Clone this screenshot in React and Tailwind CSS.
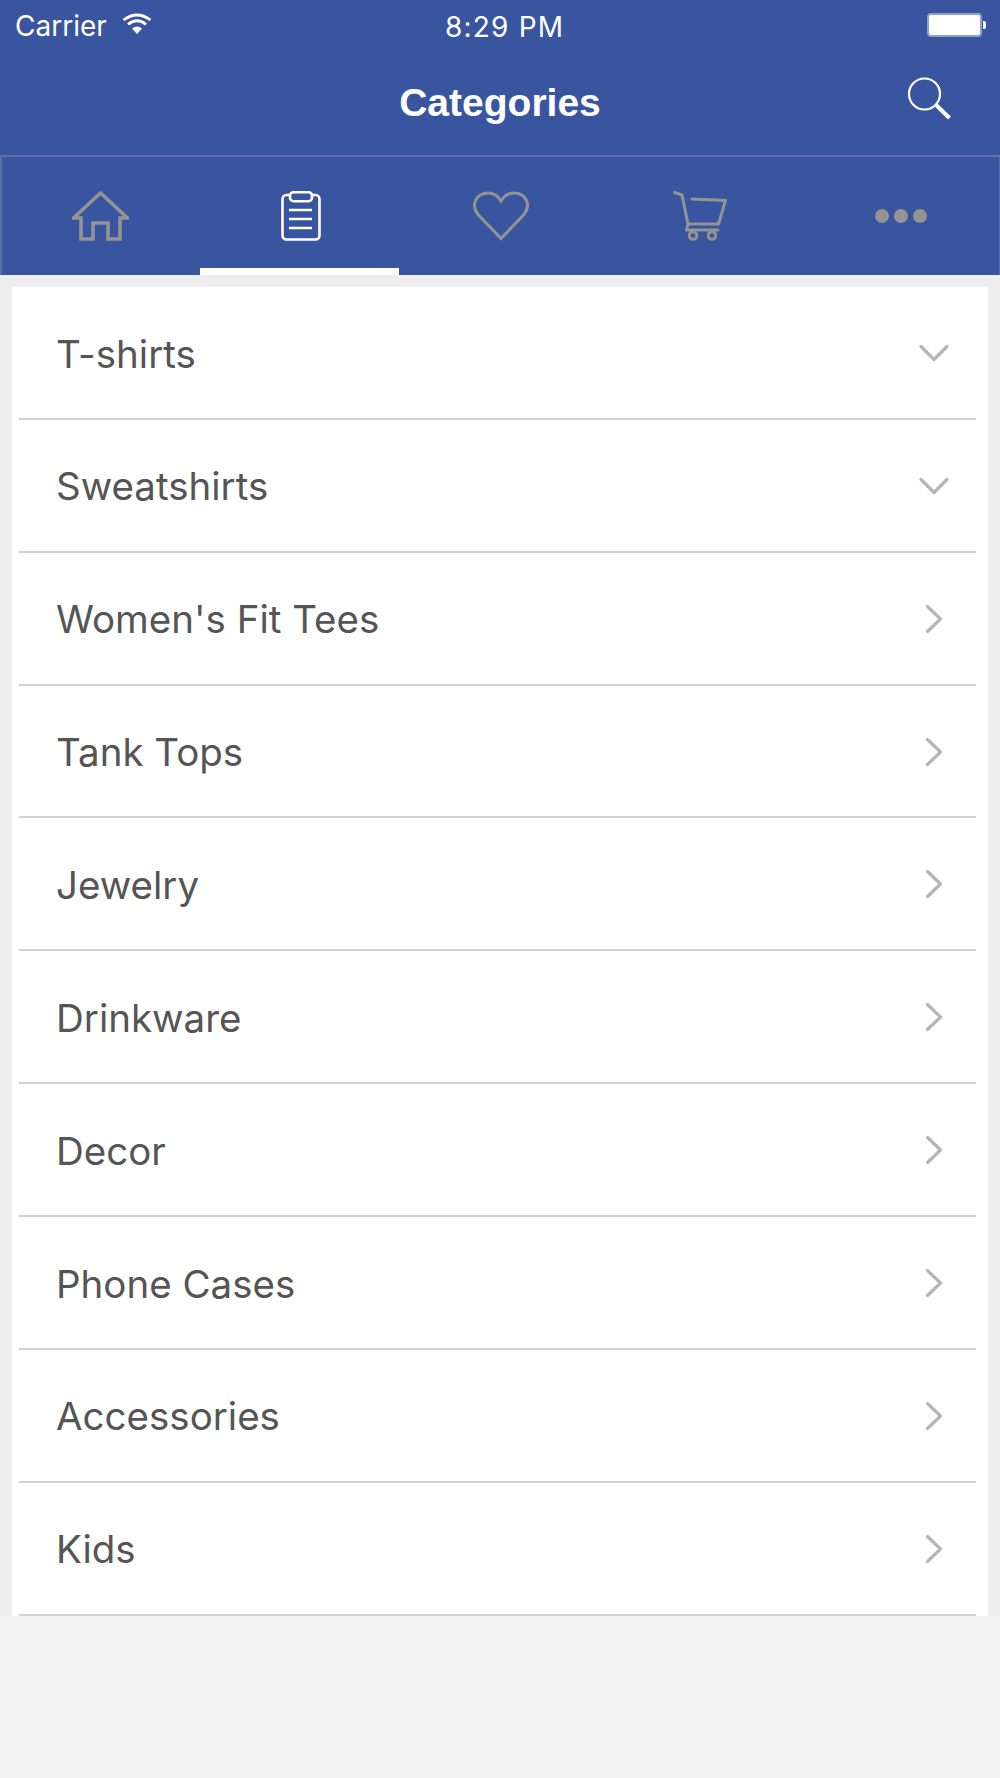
const rows = ["T-shirts","Sweatshirts","Women's Fit Tees","Tank Tops","Jewelry","Drinkware","Decor","Phone Cases","Accessories","Kids"];

function Chevron({ down }) {
  return (
    <svg width="32" height="32" viewBox="0 0 32 32" fill="none" stroke="#b5b5b5" strokeWidth="3.2" strokeLinecap="round" strokeLinejoin="round" className="mt-[1px]">
      {down ? <path d="M3 9.5 L16 22.5 L29 9.5" /> : <path d="M9.5 3.5 L22.5 16 L9.5 28.5" />}
    </svg>
  );
}

export default function App() {
  return (
    <div className="w-[1000px] h-[1778px] bg-[#f1f1f2] overflow-hidden flex flex-col" style={{ fontFamily: "Inter, sans-serif" }}>
      <div className="h-[155px] bg-[#3a559f] text-white flex flex-col shrink-0">
        <div className="h-[50px] pl-[15px] pr-[14px] pt-[1px] flex items-center justify-between relative text-[28px]">
          <div className="flex items-center gap-[15px]">
            <span>Carrier</span>
            <svg width="30" height="22" viewBox="0 0 30 22" fill="white" className="-mt-[3px]">
              <path d="M15 21 L10 15.5 Q15 11.5 20 15.5 Z" />
              <path d="M1.5 7 Q15 -3 28.5 7" fill="none" stroke="white" strokeWidth="2.8" />
              <path d="M6 11.5 Q15 4 24 11.5" fill="none" stroke="white" strokeWidth="2.8" />
            </svg>
          </div>
          <span className="absolute left-[445px] top-[6px] tracking-[1.2px]">8:29 PM</span>
          <div className="flex items-center -mt-[1px]">
            <div className="w-[55px] h-[24px] rounded-[4px] border-2 border-[#8fa0cf] bg-white" />
            <div className="w-[3px] h-[8px] bg-white rounded-r-[2px] ml-[1px]" />
          </div>
        </div>
        <div className="flex-1 flex items-center justify-center relative pt-[2px]">
          <span className="text-[39px] font-bold" style={{ fontFamily: '"Liberation Sans", sans-serif' }}>Categories</span>
          <svg className="absolute left-[906px] top-[25px]" width="46" height="46" viewBox="0 0 46 46" fill="none" stroke="white">
            <circle cx="18.5" cy="19" r="15.5" strokeWidth="2.2" />
            <path d="M30 30 L43.5 43" strokeWidth="4" />
          </svg>
        </div>
      </div>

      <div className="h-[120px] shrink-0 bg-[#3a559f] border border-b-0 border-t-2 border-l-2 border-[#5a71ab] flex">
        <Tab>
          <svg width="57" height="50" viewBox="0 0 57 50" fill="none" stroke="#949494" strokeWidth="3.6" className="-ml-[3px]">
            <path d="M1.5 27 L28.5 2 L55.5 27 H48 V48 H36 V32 H21 V48 H9 V27 Z" />
          </svg>
        </Tab>
        <Tab active>
          <svg width="40" height="50" viewBox="0 0 40 50" fill="none" stroke="white" strokeWidth="2.6">
            <rect x="1.5" y="4" width="37" height="44.5" rx="4" />
            <rect x="9" y="1.2" width="22" height="9" rx="3.5" fill="#3a559f" />
            <path d="M8 19 H31 M8 28 H31 M8 37 H31" />
          </svg>
        </Tab>
        <Tab>
          <svg width="56" height="50" viewBox="0 0 56 50" fill="none" stroke="#949494" strokeWidth="3">
            <path d="M28 47.5 L5 23.5 C-3 13 4 2 15 2 C20.5 2 25 5 28 10 C31 5 35.5 2 41 2 C52 2 59 13 51 23.5 Z" />
          </svg>
        </Tab>
        <Tab>
          <svg width="54" height="50" viewBox="0 0 54 50" fill="none" stroke="#949494" strokeWidth="3" strokeLinecap="round" strokeLinejoin="round">
            <path d="M1.5 1.5 L9 4 L15 33 H44" />
            <path d="M19 8 L52.5 9.5 L45.5 33" />
            <path d="M15 33 L13.5 39 H45" />
            <circle cx="20" cy="44.5" r="3.8" />
            <circle cx="39" cy="44.5" r="3.8" />
          </svg>
        </Tab>
        <Tab>
          <div className="flex gap-[5px] ml-[3px]">
            <div className="w-[14px] h-[14px] rounded-full bg-[#949494]" />
            <div className="w-[14px] h-[14px] rounded-full bg-[#949494]" />
            <div className="w-[14px] h-[14px] rounded-full bg-[#949494]" />
          </div>
        </Tab>
      </div>

      <div className="bg-[#eeeeee] pt-[12px] px-[12px]">
        <div className="bg-white">
          {rows.map((r, i) => (
            <div key={r} className="h-[132.86px] ml-[7px] mr-[12px] pl-[37px] pr-[26px] border-b-2 border-[#d1d1d1] flex items-center justify-between text-[38.5px] text-[#555555]">
              <span className="mt-[4px]">{r}</span>
              <Chevron down={i < 2} />
            </div>
          ))}
        </div>
      </div>
    </div>
  );
}

function Tab({ active, children }) {
  return (
    <div className="flex-1 relative flex items-center justify-center">
      {children}
      {active && <div className="absolute left-[-1px] right-[2px] bottom-0 h-[7px] bg-white" />}
    </div>
  );
}
